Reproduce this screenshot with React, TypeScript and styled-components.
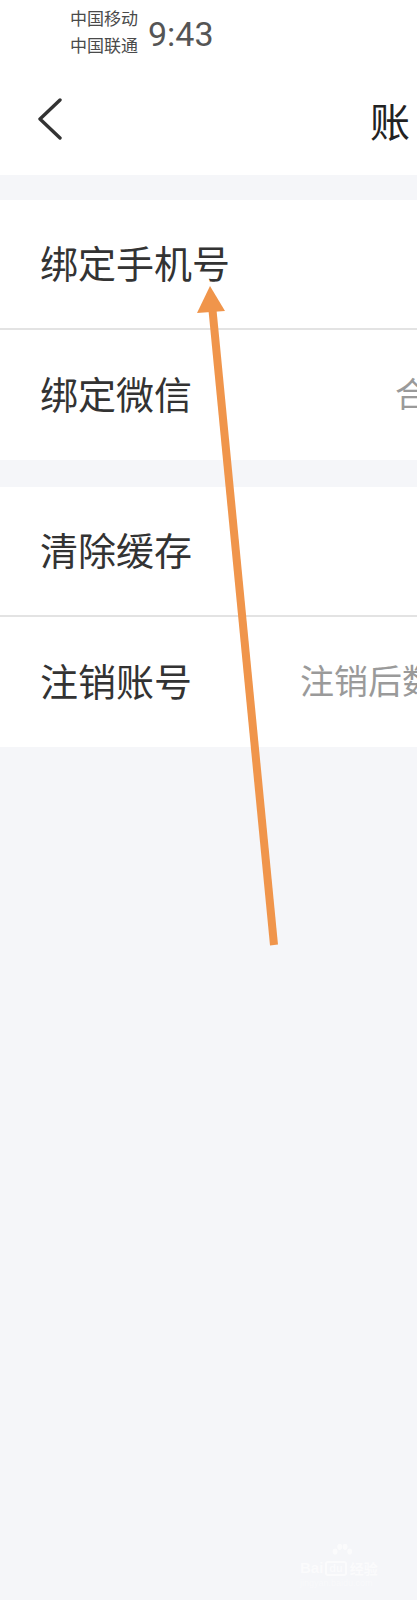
import React, { FunctionComponent } from 'react';
import styled, { createGlobalStyle } from 'styled-components';

const GlobalStyle = createGlobalStyle`
  html, body {
    margin: 0;
    padding: 0;
    background: #f5f6f9;
  }
  * {
    box-sizing: border-box;
  }
`;

const rows = [
  [
    { label: '绑定手机号', value: '', gap: 0 },
    { label: '绑定微信', value: '合', gap: 203 },
  ],
  [
    { label: '清除缓存', value: '', gap: 0 },
    { label: '注销账号', value: '注销后数', gap: 108 },
  ],
];

let App: FunctionComponent = () => {
  return (
    <Page>
      <GlobalStyle />

      <StatusBar>
        <Carriers>
          <span>中国移动</span>
          <span>中国联通</span>
        </Carriers>
        <Clock>9:43</Clock>
      </StatusBar>

      <NavBar>
        <BackIcon viewBox="0 0 26 42">
          <path d="M23 2 L3 21 L23 40" />
        </BackIcon>
        <Title>账</Title>
      </NavBar>

      {rows.map((group, gi) => (
        <Group key={gi}>
          {group.map((row, ri) => (
            <Row key={row.label} last={ri === group.length - 1}>
              <Label>{row.label}</Label>
              {row.value && <Value gap={row.gap}>{row.value}</Value>}
            </Row>
          ))}
        </Group>
      ))}

      <Arrow viewBox="0 0 417 1600">
        <line x1="212" y1="305" x2="274" y2="945" />
        <polygon points="210,286 197,313 225,311" />
      </Arrow>

      <Watermark>
        <Paw viewBox="0 0 30 26">
          <ellipse cx="6" cy="11" rx="3.2" ry="4" />
          <ellipse cx="12" cy="5" rx="3.2" ry="4" />
          <ellipse cx="19" cy="5" rx="3.2" ry="4" />
          <ellipse cx="25" cy="11" rx="3.2" ry="4" />
        </Paw>
        <MarkText>
          Bai<MarkBox>du</MarkBox><span>经验</span>
        </MarkText>
        <MarkUrl>jingyan.baidu.com</MarkUrl>
      </Watermark>
    </Page>
  );
};

export default App;

const Page = styled.div`
  position: relative;
  width: 417px;
  min-height: 1600px;
  overflow: hidden;
  background: #f5f6f9;
  font-family: "Noto Sans CJK SC", "Noto Sans", sans-serif;
`;

const StatusBar = styled.div`
  display: flex;
  align-items: flex-start;
  height: 70px;
  padding: 4px 0 0 70px;
  background: #ffffff;
`;
const Carriers = styled.div`
  display: flex;
  flex-flow: column;
  font-size: 17px;
  line-height: 27px;
  color: #4a4a4a;
`;
const Clock = styled.div`
  margin: 10px 0 0 10px;
  font-family: Roboto, "Noto Sans", sans-serif;
  font-size: 34px;
  line-height: 40px;
  color: #555555;
`;

const NavBar = styled.div`
  display: flex;
  align-items: center;
  height: 105px;
  padding-left: 37px;
  background: #ffffff;
  white-space: nowrap;
`;
const BackIcon = styled.svg`
  width: 26px;
  height: 42px;
  flex: none;
  margin-bottom: 8px;

  path {
    fill: none;
    stroke: #333333;
    stroke-width: 3.4;
    stroke-linecap: round;
    stroke-linejoin: round;
  }
`;
const Title = styled.div`
  margin-left: 307px;
  margin-bottom: 6px;
  font-size: 40px;
  line-height: 1;
  color: #222222;
`;

const Group = styled.div`
  margin-top: 25px;
  background: #ffffff;

  & + & {
    margin-top: 27px;
  }
`;
const Row = styled.div<{ last?: boolean }>`
  display: flex;
  align-items: center;
  height: 130px;
  padding: 0 0 4px 40px;
  white-space: nowrap;
  border-bottom: ${({ last }) => (last ? 'none' : '2px solid #e3e3e3')};
`;
const Label = styled.div`
  flex: none;
  font-size: 38px;
  line-height: 1;
  color: #333333;
`;
const Value = styled.div<{ gap: number }>`
  flex: none;
  margin-left: ${({ gap }) => gap}px;
  font-size: 34px;
  line-height: 1;
  color: #9a9a9a;
`;

const Arrow = styled.svg`
  position: absolute;
  top: 0;
  left: 0;
  width: 417px;
  height: 1600px;
  pointer-events: none;

  line {
    stroke: #f0954b;
    stroke-width: 8;
  }
  polygon {
    fill: #f0954b;
  }
`;

const Watermark = styled.div`
  position: absolute;
  left: 300px;
  top: 1543px;
  width: 100px;
  color: #ffffff;
  opacity: 0.6;
`;
const Paw = styled.svg`
  position: absolute;
  left: 30px;
  top: 0;
  width: 24px;
  height: 20px;
  fill: #ffffff;
`;
const MarkText = styled.div`
  display: flex;
  align-items: center;
  margin-top: 17px;
  font-family: "Liberation Sans", sans-serif;
  font-size: 15px;
  font-weight: 700;
  line-height: 16px;

  span {
    margin-left: 3px;
    font-family: "Noto Sans CJK SC", sans-serif;
    font-size: 14px;
  }
`;
const MarkBox = styled.b`
  margin-left: 2px;
  padding: 0 2px;
  border-radius: 3px;
  border: 2px solid #ffffff;
  font-size: 11px;
  line-height: 11px;
`;
const MarkUrl = styled.div`
  margin-top: 2px;
  font-family: "Liberation Sans", sans-serif;
  font-size: 9px;
  line-height: 10px;
  opacity: 0.7;
`;
